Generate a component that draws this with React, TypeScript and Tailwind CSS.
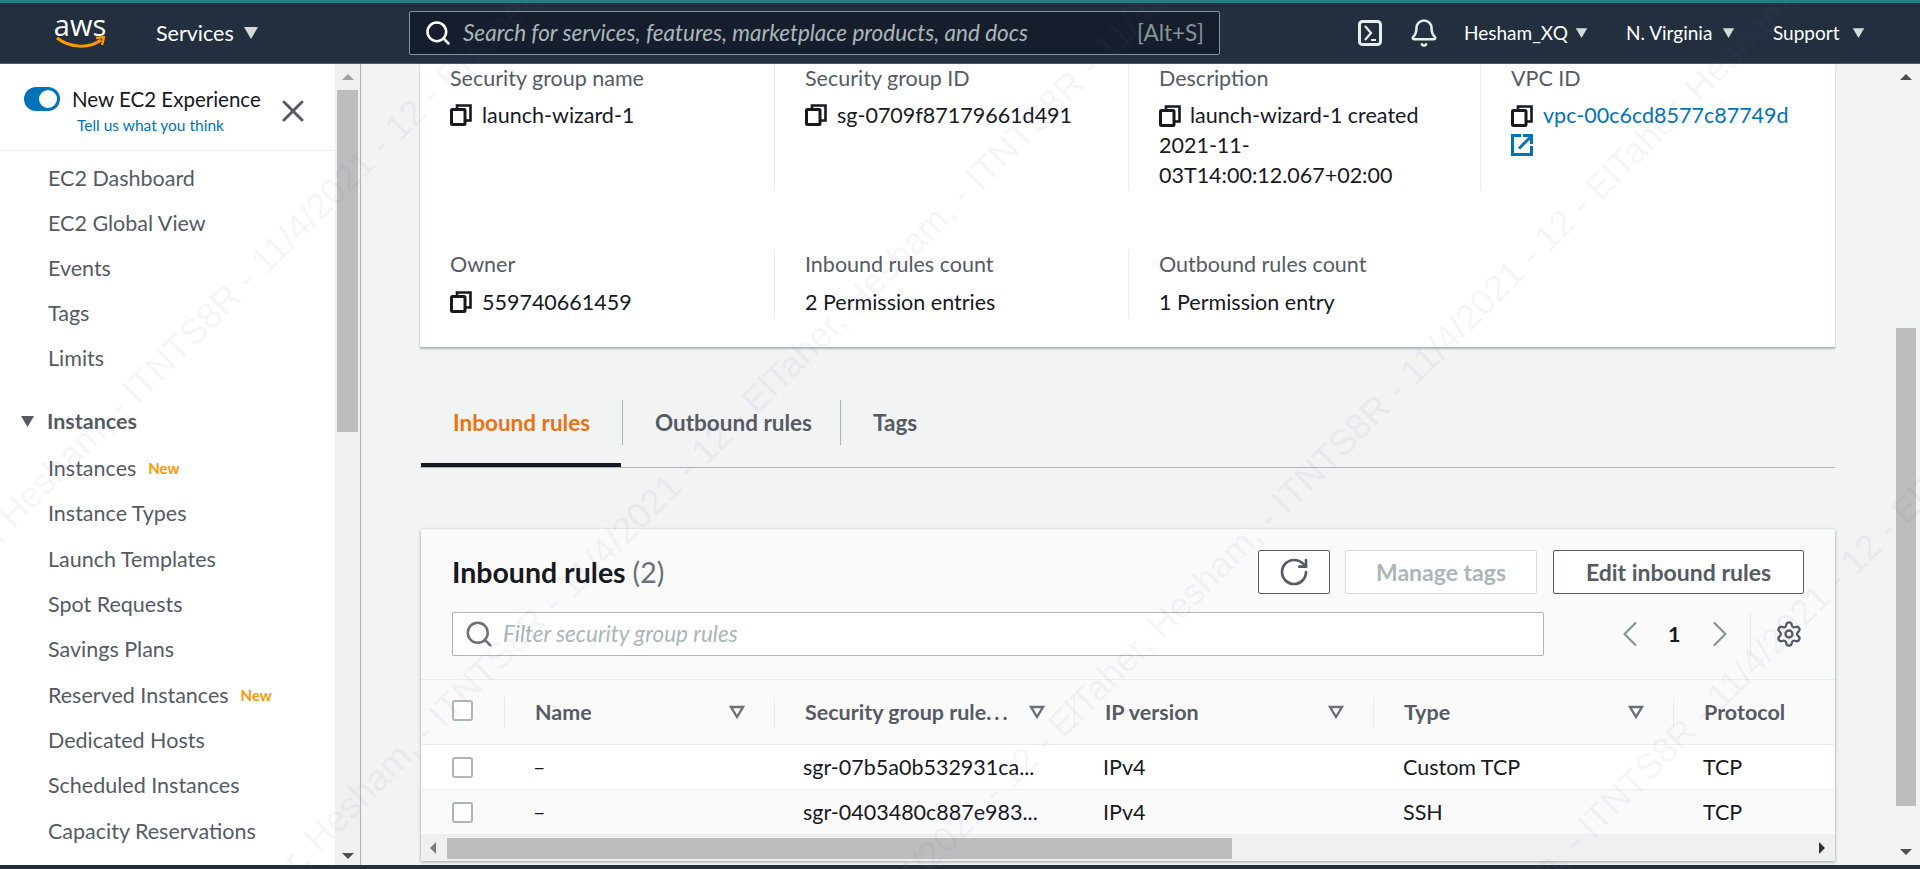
import { Bell, ChevronLeft, ChevronRight, RotateCw, Search, Settings, X } from "lucide-react";

const sidebarTop = ["EC2 Dashboard", "EC2 Global View", "Events", "Tags", "Limits"];
const sidebarInstances = [
  { label: "Instances", isNew: true },
  { label: "Instance Types" },
  { label: "Launch Templates" },
  { label: "Spot Requests" },
  { label: "Savings Plans" },
  { label: "Reserved Instances", isNew: true },
  { label: "Dedicated Hosts" },
  { label: "Scheduled Instances" },
  { label: "Capacity Reservations" },
];
const rows = [
  { id: "sgr-07b5a0b532931ca...", type: "Custom TCP" },
  { id: "sgr-0403480c887e983...", type: "SSH" },
];
const mark = "ElTaher, Hesham, - ITNTS8R - 11/4/2021 - 12 - ".repeat(6);

function Caret({ className }: { className: string }) {
  return (
    <svg viewBox="0 0 16 14" className={className}>
      <path d="M1 1h14L8 13z" fill="currentColor" />
    </svg>
  );
}

function CopyIcon() {
  return (
    <svg viewBox="0 0 22 22" className="w-[22px] h-[22px] shrink-0 text-[#16191f]">
      <path d="M7 5V1.5h13.5v15H16" fill="none" stroke="currentColor" strokeWidth="2.6" />
      <rect x="1.5" y="5.5" width="13.5" height="15" rx="1" fill="none" stroke="currentColor" strokeWidth="3" />
    </svg>
  );
}

function LinkOutIcon() {
  return (
    <svg viewBox="0 0 22 22" className="w-[22px] h-[22px] text-[#0073bb]">
      <path d="M10 1.5H1.5v19h19V12" fill="none" stroke="currentColor" strokeWidth="3" />
      <path d="M8 14.5L19 3.5M12 1.5h8.5V10" fill="none" stroke="currentColor" strokeWidth="3" />
    </svg>
  );
}

function FilterCaret() {
  return (
    <svg viewBox="0 0 16 16" className="w-[16px] h-[16px] shrink-0 text-[#687078]">
      <path d="M2 3h12L8 13z" fill="none" stroke="currentColor" strokeWidth="2.4" />
    </svg>
  );
}

function Checkbox() {
  return <div className="w-[21px] h-[21px] rounded-[3px] border-2 border-[#aab7b8] bg-white" />;
}

function Arrow({ className }: { className: string }) {
  return <div className={"w-0 h-0 " + className} />;
}

function Field({ label, children, width, last, low }: any) {
  return (
    <div className={width + " " + (last ? "" : "border-r border-[#eaeded]") + " pl-[30px] pr-[20px] shrink-0"}>
      <div className="h-[28px] leading-[28px] text-[#545b64] whitespace-nowrap">{label}</div>
      <div className={(low ? "mt-[9px]" : "mt-[8px]") + " leading-[30px] text-[#16191f]"}>{children}</div>
    </div>
  );
}

function HeadCell({ width, label, filter = true }: any) {
  return (
    <div className={width + " h-[31px] border-l border-[#eaeded] flex items-center justify-between pl-[30px] pr-[29px] shrink-0 font-bold text-[#545b64] whitespace-nowrap"}>
      <span>{label}</span>
      {filter && <FilterCaret />}
    </div>
  );
}

function Row({ id, type, white }: any) {
  return (
    <div className={"h-[45px] flex items-center border-b border-[#eaeded] text-[#16191f] whitespace-nowrap " + (white ? "bg-white" : "")}>
      <div className="w-[83px] pl-[31px] shrink-0"><Checkbox /></div>
      <div className="w-[270px] pl-[29px] shrink-0">–</div>
      <div className="w-[300px] pl-[29px] shrink-0">{id}</div>
      <div className="w-[299px] pl-[29px] shrink-0">IPv4</div>
      <div className="w-[300px] pl-[30px] shrink-0">{type}</div>
      <div className="pl-[30px]">TCP</div>
    </div>
  );
}

export default function App() {
  return (
    <div className="relative w-[1920px] h-[869px] overflow-hidden flex flex-col bg-[#f2f3f3] text-[21.5px] font-['Lato',sans-serif]">
      <div className="h-[3px] bg-[#2a7d80]" />
      <header className="h-[61px] bg-[#232f3e] border-b border-[#545b64] flex items-center text-white shrink-0">
        <div className="ml-[55px] w-[50px] flex flex-col items-center">
          <span className="text-[29px] leading-[24px] font-['Open_Sans',sans-serif] -mt-[4px]">aws</span>
          <svg viewBox="0 0 50 14" className="w-[50px] h-[14px] -mt-[1px]">
            <path d="M2 2c13 10 32 11 44 2" fill="none" stroke="#ff9900" strokeWidth="3" />
            <path d="M41 2l8-1-2 8" fill="none" stroke="#ff9900" strokeWidth="2.4" />
          </svg>
        </div>
        <span className="ml-[51px] w-[77px] whitespace-nowrap">Services</span>
        <Caret className="ml-[10px] w-[16px] h-[14px] text-[#d5dbdb]" />
        <div className="ml-[150px] w-[811px] h-[44px] rounded-[2px] border border-[#879596] bg-[#161e2d] flex items-center pl-[14px] pr-[15px] text-[22.5px]">
          <Search size={28} strokeWidth={2.2} className="text-white shrink-0" />
          <span className="ml-[11px] italic text-[#aab7b8] whitespace-nowrap">Search for services, features, marketplace products, and docs</span>
          <span className="ml-auto text-[#879596]">[Alt+S]</span>
        </div>
        <svg viewBox="0 0 24 26" className="ml-[138px] w-[24px] h-[26px] text-[#eaeded]">
          <rect x="1.5" y="1.5" width="21" height="23" rx="3" fill="none" stroke="currentColor" strokeWidth="3" />
          <path d="M7 6l6 7-6 7M13 20h5" fill="none" stroke="currentColor" strokeWidth="2.2" />
        </svg>
        <Bell size={30} strokeWidth={2} className="ml-[27px] text-[#eaeded]" />
        <span className="ml-[25px] w-[98px] text-[19px] whitespace-nowrap">Hesham_XQ</span>
        <Caret className="ml-[13px] w-[13px] h-[12px] text-[#d5dbdb]" />
        <span className="ml-[38px] w-[84px] text-[19px] whitespace-nowrap">N. Virginia</span>
        <Caret className="ml-[12px] w-[13px] h-[12px] text-[#d5dbdb]" />
        <span className="ml-[38px] w-[67px] text-[19px]">Support</span>
        <Caret className="ml-[12px] w-[13px] h-[12px] text-[#d5dbdb]" />
      </header>

      <div className="flex flex-1 min-h-0">
        <aside className="w-[361px] shrink-0 flex border-r border-[#aab7b8] bg-white">
          <div className="w-[335px] shrink-0">
            <div className="h-[87px] relative border-b border-[#eaeded]">
              <div className="flex pl-[24px] pt-[23px] items-center h-[47px]">
                <div className="w-[36px] h-[24px] rounded-full bg-[#0073bb] flex items-center justify-end pr-[3px]">
                  <div className="w-[18px] h-[18px] rounded-full bg-white" />
                </div>
                <span className="ml-[12px] text-[#16191f] text-[20.5px] leading-[24px] whitespace-nowrap">New EC2 Experience</span>
              </div>
              <div className="ml-[77px] mt-[4px] text-[15.5px] leading-[20px] text-[#0073bb]">Tell us what you think</div>
              <X size={36} strokeWidth={2} className="absolute left-[275px] top-[29px] text-[#545b64]" />
            </div>
            <div className="pl-[48px] text-[#545b64]">
              {sidebarTop.map((s) => (
                <div key={s} className="h-[45px] leading-[45px] whitespace-nowrap first:mt-[5px]">{s}</div>
              ))}
            </div>
            <div className="mt-[18px] pl-[20px] h-[45px] flex items-center font-bold text-[#545b64]">
              <Caret className="w-[15px] h-[13px]" />
              <span className="ml-[12px]">Instances</span>
            </div>
            <div className="pl-[48px] mt-[2px] text-[#545b64]">
              {sidebarInstances.map((s) => (
                <div key={s.label} className="h-[45.3px] leading-[45px] flex items-center whitespace-nowrap">
                  {s.label}
                  {s.isNew && <span className="ml-[12px] text-[15px] font-bold text-[#ff9900]">New</span>}
                </div>
              ))}
            </div>
          </div>
          <div className="w-[25px] bg-[#f0f0f0] flex flex-col items-center relative">
            <Arrow className="absolute top-[10px] border-x-[6px] border-x-transparent border-b-[6px] border-b-[#a0a0a0]" />
            <div className="mt-[26px] w-[21px] h-[342px] bg-[#bdbdbd]" />
            <Arrow className="absolute bottom-[6px] border-x-[6px] border-x-transparent border-t-[6px] border-t-[#505050]" />
          </div>
        </aside>

        <main className="flex-1 min-w-0 pl-[59px] pr-[57px]">
          <section className="h-[284px] bg-white border-b border-[#aab7b8] shadow-[0_1px_2px_rgba(0,0,0,0.25)]">
            <div className="flex h-[126px]">
              <Field label="Security group name" width="w-[355px]">
                <div className="flex items-center gap-[10px]"><CopyIcon />launch-wizard-1</div>
              </Field>
              <Field label="Security group ID" width="w-[354px]">
                <div className="flex items-center gap-[10px]"><CopyIcon />sg-0709f87179661d491</div>
              </Field>
              <Field label="Description" width="w-[352px]">
                <div className="relative pl-0">
                  <span className="inline-block align-[-4px] mr-[9px]"><CopyIcon /></span>
                  launch-wizard-1 created 2021-11-03T14:00:12.067+02:00
                </div>
              </Field>
              <Field label="VPC ID" width="w-[354px]" last>
                <div className="whitespace-nowrap text-[#0073bb]">
                  <span className="inline-block align-[-4px] mr-[10px]"><CopyIcon /></span>
                  vpc-00c6cd8577c87749d
                </div>
                <div className="mt-[4px]"><LinkOutIcon /></div>
              </Field>
            </div>
            <div className="flex h-[68px] mt-[60px]">
              <Field label="Owner" width="w-[355px]" low>
                <div className="flex items-center gap-[10px]"><CopyIcon />559740661459</div>
              </Field>
              <Field label="Inbound rules count" width="w-[354px]" low>2 Permission entries</Field>
              <Field label="Outbound rules count" width="w-[352px]" last low>1 Permission entry</Field>
            </div>
          </section>

          <nav className="mt-[52px] h-[68px] flex border-b border-[#aab7b8] font-bold text-[22.5px]">
            <div className="w-[202px] ml-[1px]">
              <div className="h-[45px] flex items-center pl-[32px] border-r border-[#aab7b8] text-[#ec7211]">Inbound rules</div>
              <div className="mt-[18px] h-[4px] bg-[#16191f] mr-[2px]" />
            </div>
            <div className="w-[218px] h-[45px] flex items-center pl-[32px] border-r border-[#aab7b8] text-[#545b64]">Outbound rules</div>
            <div className="h-[45px] flex items-center pl-[32px] text-[#545b64]">Tags</div>
          </nav>

          <section className="mt-[61px] h-[332px] bg-[#fafafa] ml-[1px] shadow-[0_1px_3px_rgba(0,0,0,0.35)] flex flex-col">
            <div className="h-[151px] pl-[31px] pr-[31px] pt-[21px] border-b border-[#eaeded] shrink-0">
              <div className="flex items-center h-[44px]">
                <h2 className="text-[28.5px] font-bold text-[#16191f]">Inbound rules <span className="font-normal text-[#687078]">(2)</span></h2>
                <div className="ml-auto w-[72px] h-[44px] rounded-[2px] border border-[#545b64] bg-white flex items-center justify-center">
                  <RotateCw size={32} strokeWidth={2} className="text-[#545b64]" />
                </div>
                <div className="ml-[15px] w-[192px] h-[44px] rounded-[2px] border border-[#d5dbdb] bg-white flex items-center justify-center font-bold text-[23px] text-[#aab7b8]">Manage tags</div>
                <div className="ml-[16px] w-[251px] h-[44px] rounded-[2px] border border-[#545b64] bg-white flex items-center justify-center font-bold text-[23px] text-[#545b64]">Edit inbound rules</div>
              </div>
              <div className="mt-[18px] flex items-center h-[44px]">
                <div className="w-[1092px] h-[44px] rounded-[2px] border border-[#aab7b8] bg-white flex items-center pl-[11px] shrink-0">
                  <Search size={30} strokeWidth={2} className="text-[#687078]" />
                  <span className="ml-[9px] italic text-[22.5px] text-[#aab7b8]">Filter security group rules</span>
                </div>
                <ChevronLeft size={44} strokeWidth={1.2} className="ml-[64px] text-[#879596] shrink-0" />
                <span className="ml-[16px] font-bold text-[#16191f]">1</span>
                <ChevronRight size={44} strokeWidth={1.2} className="ml-[18px] text-[#879596] shrink-0" />
                <div className="ml-[8px] h-[45px] border-l border-[#eaeded]" />
                <Settings size={28} strokeWidth={2} className="ml-[24px] text-[#545b64] shrink-0" />
              </div>
            </div>
            <div className="h-[65px] flex items-center border-b border-[#eaeded] shrink-0">
              <div className="w-[83px] pl-[31px] shrink-0 -mt-[3px]"><Checkbox /></div>
              <HeadCell width="w-[270px]" label="Name" />
              <HeadCell width="w-[300px]" label={<>Security group rule<span className="tracking-[3px]">...</span></>} />
              <HeadCell width="w-[299px]" label="IP version" />
              <HeadCell width="w-[300px]" label="Type" />
              <HeadCell width="w-[160px]" label="Protocol" filter={false} />
            </div>
            <Row id={rows[0].id} type={rows[0].type} white />
            <Row id={rows[1].id} type={rows[1].type} />
            <div className="flex-1 bg-[#f0f0f0] flex items-center relative">
              <Arrow className="absolute left-[9px] border-y-[6px] border-y-transparent border-r-[6px] border-r-[#808080]" />
              <div className="ml-[26px] w-[785px] h-[21px] bg-[#bdbdbd]" />
              <Arrow className="absolute right-[10px] border-y-[6px] border-y-transparent border-l-[6px] border-l-[#303030]" />
            </div>
          </section>
        </main>

        <div className="w-[28px] shrink-0 relative flex justify-center">
          <Arrow className="absolute top-[10px] border-x-[6px] border-x-transparent border-b-[6px] border-b-[#505050]" />
          <div className="mt-[264px] w-[20px] h-[478px] bg-[#bdbdbd]" />
          <Arrow className="absolute bottom-[10px] border-x-[6px] border-x-transparent border-t-[6px] border-t-[#505050]" />
        </div>
      </div>
      <div className="h-[4px] bg-[#232f3e] shrink-0" />

      {/* watermark */}
      <div className="absolute inset-0 overflow-hidden pointer-events-none text-[36px] text-[#5a5aa8]/8 font-['Liberation_Sans',sans-serif] whitespace-nowrap">
        <span className="absolute left-[-114px] top-[601px] origin-top-left -rotate-45">{mark}</span>
        <span className="absolute left-[-345px] top-[1462px] origin-top-left -rotate-45">{mark}</span>
        <span className="absolute left-[-576px] top-[2323px] origin-top-left -rotate-45">{mark}</span>
        <span className="absolute left-[-807px] top-[3184px] origin-top-left -rotate-45">{mark}</span>
      </div>
    </div>
  );
}
